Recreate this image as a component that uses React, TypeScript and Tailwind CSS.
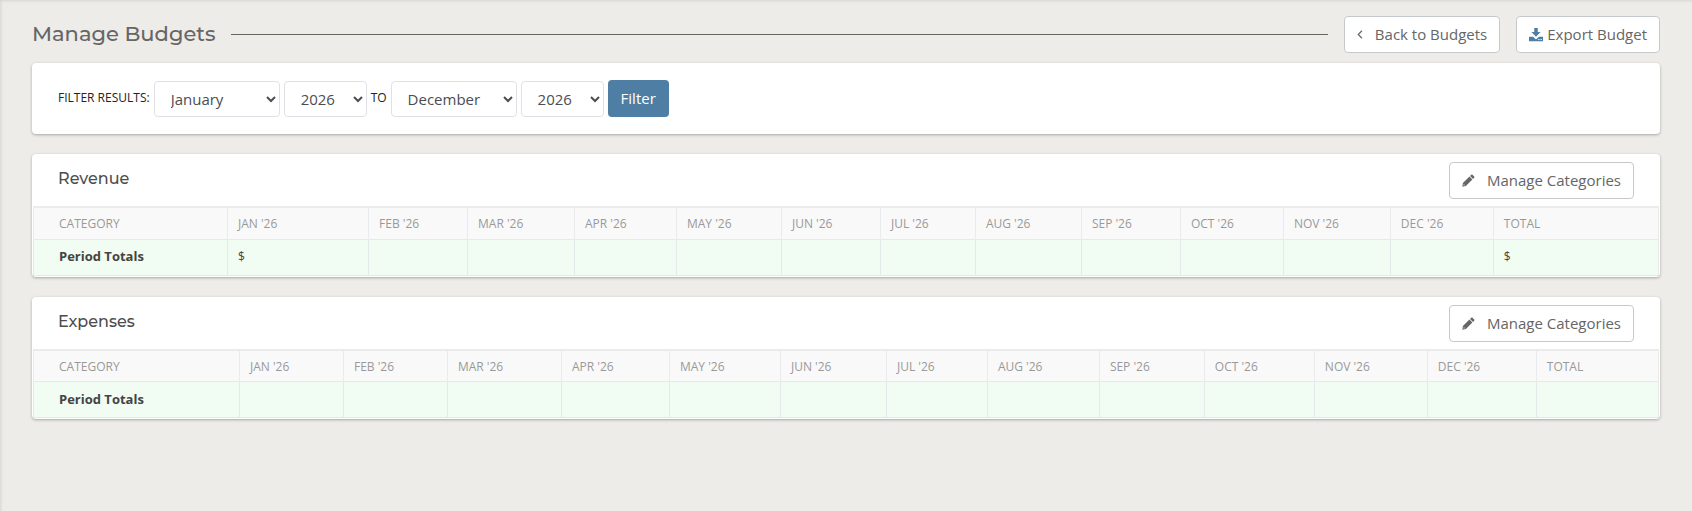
import type { ReactNode } from 'react'

const months = ['January', 'February', 'March', 'April', 'May', 'June', 'July', 'August', 'September', 'October', 'November', 'December']
const years = ['2024', '2025', '2026', '2027']

const columns = ['Category', ...months.map((m) => `${m.slice(0, 3)} '26`), 'Total']

const sections = [
  {
    title: 'Revenue',
    weights: [194, 141, 99, 107, 102, 105, 99, 95, 106, 99, 103, 107, 103, 165],
    totals: { 1: '$', 13: '$' } as Record<number, string>,
  },
  {
    title: 'Expenses',
    weights: [206, 104, 104, 114, 108, 111, 106, 101, 112, 105, 110, 113, 109, 122],
    totals: {} as Record<number, string>,
  },
]

function DownloadIcon() {
  return (
    <svg viewBox="0 0 16 16" className="size-[14px] shrink-0 fill-[#4e7ea3]" aria-hidden="true">
      <path d="M6 0h4v4.5h3.2L8 10 2.8 4.5H6z" />
      <path fillRule="evenodd" d="M0 10h4.6L8 13.2 11.4 10H16v5H0zM10.6 12.6v1.2h1.4v-1.2zM13.2 12.6v1.2h1.4v-1.2z" />
    </svg>
  )
}

function AngleLeftIcon() {
  return (
    <svg viewBox="0 0 6 10" className="h-[9px] w-[6px] shrink-0 fill-none stroke-current" strokeWidth="1.3" aria-hidden="true">
      <path d="M5.2 0.8 1 5l4.2 4.2" />
    </svg>
  )
}

function PencilIcon() {
  return (
    <svg viewBox="0 0 14 14" className="size-[13px] shrink-0 fill-current" aria-hidden="true">
      <path d="M9.9.9a1 1 0 0 1 1.4 0l1.8 1.8a1 1 0 0 1 0 1.4L11.9 5.3 8.7 2.1zM8 2.8 11.2 6l-7 7L.3 13.7 1 9.8zM2 10.9l-.3 1.4 1.4-.3z" fillRule="evenodd" />
    </svg>
  )
}

function OutlineLink({ href, className = '', children }: { href: string; className?: string; children: ReactNode }) {
  return (
    <a href={href} className={`flex h-[37px] items-center rounded-[4px] border border-[#c6c9cc] bg-white px-3 text-[15px] text-[#666] ${className}`}>
      {children}
    </a>
  )
}

function Select({ label, options, value, className }: { label: string; options: string[]; value: string; className: string }) {
  return (
    <select
      aria-label={label}
      defaultValue={value}
      className={`h-9 rounded-[4px] border border-[#dee2e6] bg-white pl-3 text-[15px] text-[#4b4d52] ${className}`}
    >
      {options.map((o) => (
        <option key={o}>{o}</option>
      ))}
    </select>
  )
}

function BudgetSection({ title, weights, totals }: (typeof sections)[number]) {
  const sum = weights.reduce((a, b) => a + b, 0)

  return (
    <section className="rounded-[4px] bg-white px-px pb-px shadow-[0_1px_3px_rgba(0,0,0,0.3)]">
      <div className="flex h-[52px] items-start justify-between px-[25px] pt-2">
        <h2 className="font-['Montserrat','Inter',sans-serif] text-[16px] font-medium leading-[34px] text-[#4d4d4d]">{title}</h2>
        <OutlineLink href="#categories" className="gap-3">
          <PencilIcon />
          Manage Categories
        </OutlineLink>
      </div>
      <table className="w-full table-fixed border-collapse text-left text-xs">
        <colgroup>
          {weights.map((w, i) => (
            <col key={i} style={{ width: `${(w / sum) * 100}%` }} />
          ))}
        </colgroup>
        <thead>
          <tr className="h-8 border-t-2 border-[#ebebeb] bg-[#f9f9f9] uppercase text-[#999]">
            {columns.map((c) => (
              <th key={c} scope="col" className="border-x border-[#e9ebed] px-[10px] pt-0.5 font-normal first:pl-[25px]">{c}</th>
            ))}
          </tr>
        </thead>
        <tbody>
          <tr className="h-9 border-y border-[#e4eaea] bg-[#f1fcf3] text-[#444]">
            <th scope="row" className="border-x border-[#e4eaea] pl-[25px] text-[13px] font-bold">Period Totals</th>
            {columns.slice(1).map((c, i) => (
              <td key={c} className="border-x border-[#e4eaea] px-[10px]">{totals[i + 1]}</td>
            ))}
          </tr>
        </tbody>
      </table>
    </section>
  )
}

export default function App() {
  return (
    <div className="min-h-screen bg-[#edece8] px-8 pt-4 font-['Open_Sans',sans-serif] shadow-[inset_2px_2px_3px_-1px_rgba(0,0,0,0.1)]">
      <header className="flex items-center">
        <h1 className="pb-0.5 font-['Montserrat','Inter',sans-serif] text-[21px] font-medium leading-8 text-[#666]">Manage Budgets</h1>
        <div className="mx-4 h-px flex-1 bg-[#66665c]" />
        <OutlineLink href="#budgets" className="gap-3">
          <AngleLeftIcon />
          Back to Budgets
        </OutlineLink>
        <OutlineLink href="#export" className="ml-4 gap-1">
          <DownloadIcon />
          Export Budget
        </OutlineLink>
      </header>

      <main className="mt-[10px] flex flex-col gap-5">
        <form className="flex h-[71px] items-center gap-1 rounded-[4px] bg-white px-[26px] text-[#222] shadow-[0_1px_3px_rgba(0,0,0,0.3)]">
          <span className="pb-0.5 text-xs">FILTER RESULTS:</span>
          <Select label="From month" options={months} value="January" className="w-[126px]" />
          <Select label="From year" options={years} value="2026" className="w-[83px]" />
          <span className="pb-0.5 text-xs">TO</span>
          <Select label="To month" options={months} value="December" className="w-[126px]" />
          <Select label="To year" options={years} value="2026" className="w-[83px]" />
          <button type="button" className="h-[37px] rounded-[4px] bg-[#4e7ea3] px-[13px] text-[15px] text-white">Filter</button>
        </form>

        {sections.map((s) => (
          <BudgetSection key={s.title} {...s} />
        ))}
      </main>
    </div>
  )
}
